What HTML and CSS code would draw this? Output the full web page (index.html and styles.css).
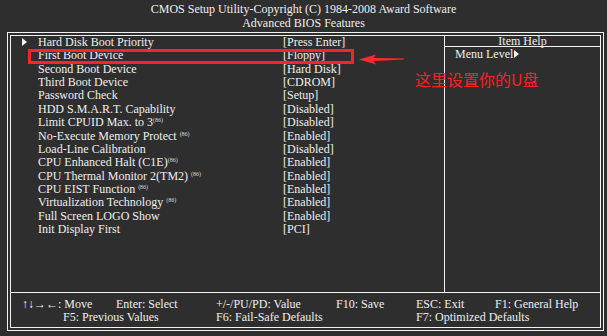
FILE: index.html
```html
<!DOCTYPE html>
<html lang="en">

<head>
    <meta charset="utf-8">
    <meta name="viewport" content="width=device-width, initial-scale=1.0">
    <title>Advanced BIOS Features</title>
    <link rel="stylesheet" href="styles.css">
</head>

<body>
    <header class="title">
        <p>CMOS Setup Utility-Copyright (C) 1984-2008 Award Software</p>
        <p>Advanced BIOS Features</p>
    </header>

    <div class="frame">
        <div class="frame-inner">
            <div class="panes">
                <ul class="items">
                    <li class="item"><span class="mark"></span><span>Hard Disk Boot Priority</span><span>[Press Enter]</span></li>
                    <li class="item"><span></span><span>First Boot Device</span><span>[Floppy]</span></li>
                    <li class="item"><span></span><span>Second Boot Device</span><span>[Hard Disk]</span></li>
                    <li class="item"><span></span><span>Third Boot Device</span><span>[CDROM]</span></li>
                    <li class="item"><span></span><span>Password Check</span><span>[Setup]</span></li>
                    <li class="item"><span></span><span>HDD S.M.A.R.T. Capability</span><span>[Disabled]</span></li>
                    <li class="item"><span></span><span>Limit CPUID Max. to 3<sup class="tag">(86)</sup></span><span>[Disabled]</span></li>
                    <li class="item"><span></span><span>No-Execute Memory Protect <sup class="tag">(86)</sup></span><span>[Enabled]</span></li>
                    <li class="item"><span></span><span>Load-Line Calibration</span><span>[Disabled]</span></li>
                    <li class="item"><span></span><span>CPU Enhanced Halt (C1E)<sup class="tag">(86)</sup></span><span>[Enabled]</span></li>
                    <li class="item"><span></span><span>CPU Thermal Monitor 2(TM2) <sup class="tag">(86)</sup></span><span>[Enabled]</span></li>
                    <li class="item"><span></span><span>CPU EIST Function <sup class="tag">(86)</sup></span><span>[Enabled]</span></li>
                    <li class="item"><span></span><span>Virtualization Technology <sup class="tag">(86)</sup></span><span>[Enabled]</span></li>
                    <li class="item"><span></span><span>Full Screen LOGO Show</span><span>[Enabled]</span></li>
                    <li class="item"><span></span><span>Init Display First</span><span>[PCI]</span></li>
                </ul>

                <aside class="help">
                    <h2>Item Help</h2>
                    <p class="level">Menu Level<span class="tri"></span></p>
                </aside>

                <!-- annotation drawn over the screen -->
                <div class="box"></div>
                <svg class="arrow" width="48" height="13" viewBox="0 0 48 13">
                    <polygon points="1,6.5 18,1.5 15.5,5 46,5.6 46,6.6 15.5,8 18,11.5" fill="#ff2a2a" />
                </svg>
                <p class="note">这里设置你的U盘</p>
            </div>

            <footer class="keys">
                <span class="k-move">↑↓→←: Move</span>
                <span class="k-enter">Enter: Select</span>
                <span class="k-value">+/-/PU/PD: Value</span>
                <span class="k-save">F10: Save</span>
                <span class="k-exit">ESC: Exit</span>
                <span class="k-help">F1: General Help</span>
                <span class="k-f5">F5: Previous Values</span>
                <span class="k-f6">F6: Fail-Safe Defaults</span>
                <span class="k-f7">F7: Optimized Defaults</span>
            </footer>
        </div>
    </div>
</body>

</html>
```

FILE: styles.css
```css
body {
    margin: 0;
    width: 607px;
    height: 336px;
    overflow: hidden;
    background-color: #2e2e2e;
    color: #efefef;
    font-family: "Liberation Serif", serif;
    font-size: 12px;
}

.title {
    padding-top: 2px;
    text-align: center;
}

.title p {
    margin: 0;
    line-height: 14px;
}

.frame {
    box-sizing: border-box;
    height: 299px;
    margin: 2px 3px 0 7px;
    padding: 2px;
    border: 1px solid #f2f2f2;
}

.frame-inner {
    box-sizing: border-box;
    height: 100%;
    border: 1px solid #f2f2f2;
    display: flex;
    flex-direction: column;
}

.panes {
    position: relative;
    flex: 1;
    display: flex;
}

.items {
    width: 433px;
    margin: 0;
    padding: 0;
    list-style: none;
}

.item {
    display: grid;
    grid-template-columns: 27px 245px 1fr;
    line-height: 13.36px;
}

.mark {
    margin: 2px 0 0 11px;
    width: 0;
    height: 0;
    border-top: 4px solid transparent;
    border-bottom: 4px solid transparent;
    border-left: 5px solid #f2f2f2;
}

.tag {
    font-size: 6px;
    line-height: 0;
    vertical-align: 4px;
    color: #d8d8d8;
}

.help {
    flex: 1;
    border-left: 1px solid #f2f2f2;
}

.help h2 {
    margin: 0;
    font-size: 12px;
    font-weight: normal;
    line-height: 10px;
    text-align: center;
    border-bottom: 1px solid #f2f2f2;
}

.level {
    margin: 1px 0 0 10px;
    line-height: 13.4px;
}

.tri {
    display: inline-block;
    margin-left: 1px;
    width: 0;
    height: 0;
    border-top: 4px solid transparent;
    border-bottom: 4px solid transparent;
    border-left: 5px solid #f2f2f2;
}

.box {
    position: absolute;
    left: 17px;
    top: 13px;
    width: 326px;
    height: 15px;
    box-sizing: border-box;
    border: 3px solid #f02828;
}

.arrow {
    position: absolute;
    left: 347px;
    top: 17px;
}

.note {
    position: absolute;
    left: 404px;
    top: 35px;
    margin: 0;
    font-family: "Noto Sans CJK SC", sans-serif;
    font-size: 16px;
    line-height: 16px;
    color: #ff2020;
}

.keys {
    height: 35px;
    border-top: 1px solid #f2f2f2;
    padding: 5px 0 0 11px;
    box-sizing: border-box;
    display: grid;
    grid-template-columns: 41px 53px 100px 120px 80px 79px 1fr;
    grid-auto-rows: 13.4px;
    line-height: 13.4px;
    white-space: nowrap;
}

.k-move { grid-column: 1 / span 2; }
.k-enter { grid-column: 3; }
.k-value { grid-column: 4; }
.k-save { grid-column: 5; }
.k-exit { grid-column: 6; }
.k-help { grid-column: 7; }
.k-f5 { grid-column: 2 / span 2; }
.k-f6 { grid-column: 4 / span 2; }
.k-f7 { grid-column: 6 / span 2; }
```
